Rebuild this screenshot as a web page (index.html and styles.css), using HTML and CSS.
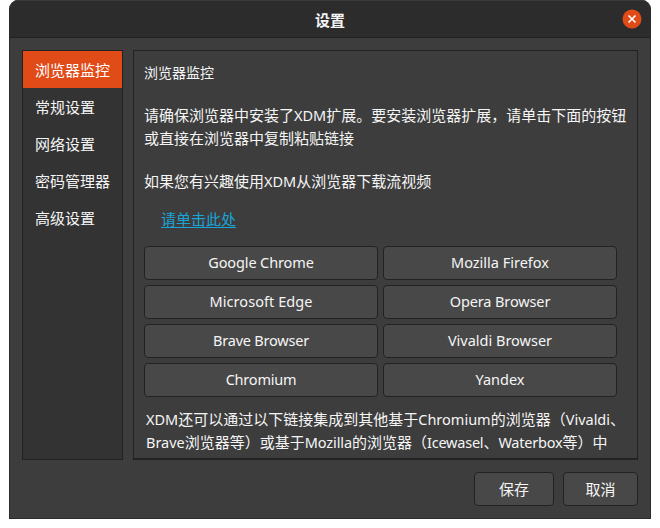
FILE: index.html
```html
<!DOCTYPE html>
<html lang="zh-CN">
<head>
<meta charset="utf-8">
<title>设置</title>
<link rel="stylesheet" href="styles.css">
</head>
<body>
<div class="window">
  <header class="titlebar">
    <h1 class="title">设置</h1>
    <button class="close" aria-label="关闭">
      <svg width="20" height="20" viewBox="0 0 20 20"><circle cx="10" cy="10" r="9.5" fill="#e04b18"/><path d="M6.5 6.5l7 7M13.5 6.5l-7 7" stroke="#fff" stroke-width="1.6"/></svg>
    </button>
  </header>
  <main class="body">
    <nav class="sidebar">
      <div class="item active">浏览器监控</div>
      <div class="item">常规设置</div>
      <div class="item">网络设置</div>
      <div class="item">密码管理器</div>
      <div class="item">高级设置</div>
    </nav>
    <section class="panel">
      <h2 class="heading">浏览器监控</h2>
      <p class="intro">请确保浏览器中安装了<span class="latin">XDM</span>扩展。要安装浏览器扩展，请单击下面的按钮<br>或直接在浏览器中复制粘贴链接</p>
      <p class="video">如果您有兴趣使用<span class="latin">XDM</span>从浏览器下载流视频</p>
      <a class="link">请单击此处</a>
      <div class="browsers">
        <button class="btn tight">Google Chrome</button>
        <button class="btn">Mozilla Firefox</button>
        <button class="btn wide">Microsoft Edge</button>
        <button class="btn tight">Opera Browser</button>
        <button class="btn tighter">Brave Browser</button>
        <button class="btn">Vivaldi Browser</button>
        <button class="btn tighter">Chromium</button>
        <button class="btn">Yandex</button>
      </div>
      <p class="more"><span class="latin">XDM</span>还可以通过以下链接集成到其他基于<span class="latin">Chromium</span>的浏览器（<span class="latin">Vivaldi</span>、<br><span class="latin">Brave</span>浏览器等）或基于<span class="latin tight">Mozilla</span>的浏览器（<span class="latin tighter">Icewasel</span>、<span class="latin tighter">Waterbox</span>等）中</p>
    </section>
  </main>
  <footer class="actions">
    <button class="btn save">保存</button>
    <button class="btn cancel">取消</button>
  </footer>
</div>
</body>
</html>
```
FILE: styles.css
```css
* { box-sizing: border-box; }
body {
  margin: 0;
  background: #fff;
  color: #f5f5f5;
  font: 15px/23px "Noto Sans", "Noto Sans CJK SC", sans-serif;
  overflow: hidden;
}
h1, h2, p { margin: 0; font-weight: normal; }
button { font: inherit; color: inherit; padding: 0; }
.window {
  width: 642px;
  height: 519px;
  margin-left: 9px;
  background: #3d3d3d;
  border: 1px solid #2c2c2c;
  border-top: 0;
  border-radius: 9px 9px 0 0;
  overflow: hidden;
}
.titlebar {
  height: 38px;
  display: grid;
  grid-template-columns: 1fr auto 1fr;
  align-items: center;
  background: #2c2c2c;
  border-top: 1px solid #3a3a3a;
  border-bottom: 1px solid #202020;
}
.title { grid-column: 2; font-size: 15px; font-weight: 700; padding-top: 2px; }
.close {
  justify-self: end;
  width: 20px;
  height: 20px;
  margin-right: 8px;
  border: 0;
  background: none;
}
.close svg { display: block; }
.body { display: flex; gap: 10px; height: 422px; padding: 12px 12px 0; }
.sidebar {
  width: 101px;
  height: 410px;
  background: #333;
  border: 1px solid #222;
}
.item { height: 37px; padding-left: 12px; line-height: 38px; }
.active { background: #e04b18; color: #fff; }
.panel {
  flex: 1;
  height: 410px;
  padding: 10px 10px 0;
  border: 1px solid #222;
  border-bottom-width: 2px;
  overflow: hidden;
  white-space: nowrap;
}
.heading { font-size: 14px; line-height: 23px; }
.intro { margin-top: 20px; }
.video { margin-top: 20px; }
.link {
  display: block;
  margin: 15px 0 0 17px;
  color: #19a5d8;
  text-decoration: underline;
  text-decoration-thickness: 1px;
  text-underline-offset: 2px;
}
.browsers {
  display: grid;
  grid-template-columns: 234px 234px;
  grid-auto-rows: 34px;
  gap: 5px;
  margin-top: 15px;
}
.btn {
  background: #484848;
  border: 1px solid #222;
  border-radius: 4px;
}
.browsers .btn { font-size: 14.5px; padding-bottom: 2px; }
.latin { font-size: 14.5px; }
.tight { letter-spacing: -0.12px; }
.tighter { letter-spacing: -0.22px; }
.wide { letter-spacing: 0.07px; }
.more { margin: 11px 0 0 2px; }
.actions { display: flex; justify-content: flex-end; gap: 9px; padding: 12px 12px 0; }
.actions .btn { height: 34px; }
.save { width: 80px; }
.cancel { width: 75px; }
```
